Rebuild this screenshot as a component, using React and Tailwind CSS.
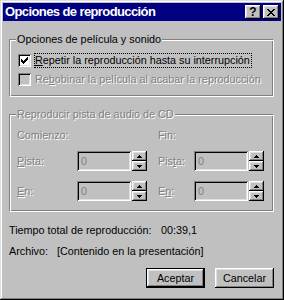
import React from 'react';
import clsx from 'clsx';

// classic 3D borders
const RAISED = 'shadow-[inset_-1px_-1px_0_#000,inset_1px_1px_0_#fff,inset_-2px_-2px_0_#808080,inset_2px_2px_0_#dfdfdf]';
const SUNKEN = 'shadow-[inset_1px_1px_0_#808080,inset_-1px_-1px_0_#fff,inset_2px_2px_0_#000,inset_-2px_-2px_0_#dfdfdf]';
const WINDOW = 'shadow-[inset_-1px_-1px_0_#000,inset_1px_1px_0_#dfdfdf,inset_-2px_-2px_0_#808080,inset_2px_2px_0_#fff]';
const ETCHED = 'border border-t-[#808080] border-l-[#808080] border-r-white border-b-white shadow-[inset_1px_1px_0_#fff,inset_-1px_-1px_0_#808080]';
const DIS = 'text-[#808080] [text-shadow:1px_1px_0_#fff]';

function Pixels({ w, h, runs, color = '#000' }) {
  return (
    <svg width={w} height={h} viewBox={`0 0 ${w} ${h}`} shapeRendering="crispEdges" className="block">
      {runs.map(([x, y, len], i) => (
        <rect key={i} x={x} y={y} width={len} height="1" fill={color} />
      ))}
    </svg>
  );
}

const CHECK = [[6, 0, 1], [5, 1, 2], [0, 2, 1], [4, 2, 3], [0, 3, 2], [3, 3, 3], [0, 4, 5], [1, 5, 3], [2, 6, 1]];
const CLOSE = [[0, 0, 2], [6, 0, 2], [1, 1, 2], [5, 1, 2], [2, 2, 4], [3, 3, 2], [2, 4, 4], [1, 5, 2], [5, 5, 2], [0, 6, 2], [6, 6, 2]];
const UP = [[2, 0, 1], [1, 1, 3], [0, 2, 5]];
const DOWN = [[0, 0, 5], [1, 1, 3], [2, 2, 1]];

function TitleButton({ children }) {
  return (
    <div className={clsx('w-[16px] h-[14px] bg-[#c0c0c0] flex items-center justify-center', RAISED)}>
      {children}
    </div>
  );
}

function CheckBox({ checked, disabled }) {
  return (
    <span className={clsx('w-[13px] h-[13px] shrink-0 flex items-center justify-center', SUNKEN, disabled ? 'bg-[#c0c0c0]' : 'bg-white')}>
      {checked && <Pixels w={7} h={7} runs={CHECK} />}
    </span>
  );
}

function NumBox() {
  return (
    <div className={clsx('w-[54px] h-[20px] shrink-0 bg-[#c0c0c0] pl-[4px] flex items-center text-[#808080]', SUNKEN)}>
      0
    </div>
  );
}

function Spinner() {
  return (
    <div className="w-[15px] h-[20px] shrink-0 ml-[1px] flex flex-col">
      <div className={clsx('h-[10px] bg-[#c0c0c0] flex items-center justify-center', RAISED)}>
        <Pixels w={5} h={3} runs={UP} />
      </div>
      <div className={clsx('h-[10px] bg-[#c0c0c0] flex items-center justify-center', RAISED)}>
        <Pixels w={5} h={3} runs={DOWN} />
      </div>
    </div>
  );
}

function Button({ children, isDefault }) {
  return (
    <div className={clsx('w-[59px] h-[20px] bg-[#c0c0c0] flex items-center justify-center', RAISED, isDefault && 'border border-black')}>
      {children}
    </div>
  );
}

export default function App() {
  return (
    <div className={clsx("w-[284px] h-[300px] bg-[#c0c0c0] p-[3px] flex flex-col font-['Liberation_Sans',Arial,sans-serif] text-[10.8px] leading-[13px] text-black", WINDOW)}>
      {/* Title bar */}
      <div className="h-[18px] shrink-0 bg-[#000080] flex items-center pl-[2px] pr-[2px]">
        <span className="text-white font-bold text-[13px] leading-[18px] tracking-[-0.6px]">Opciones de reproducción</span>
        <div className="ml-auto flex gap-[2px]">
          <TitleButton>
            <span className="font-bold text-[12px] leading-none">?</span>
          </TitleButton>
          <TitleButton>
            <Pixels w={8} h={7} runs={CLOSE} />
          </TitleButton>
        </div>
      </div>

      <div className="flex-1 flex flex-col pl-[6px] pr-[7px]">
        {/* Movie and sound options */}
        <div className={clsx('mt-[18px] pl-[8px] pb-[8px]', ETCHED)}>
          <div className="-mt-[7px] -ml-[2px] w-fit px-[1px] bg-[#c0c0c0]">Opciones de película y sonido</div>
          <div className="mt-[6px] flex flex-col gap-[2px]">
            <div className="h-[17px] flex items-center">
              <CheckBox checked />
              <span className="ml-[3px] h-[15px] pr-[1px] flex items-center border border-dotted border-black">
                <span className="underline">R</span>epetir la reproducción hasta su interrupción
              </span>
            </div>
            <div className="h-[17px] flex items-center">
              <CheckBox disabled />
              <span className={clsx('ml-[4px]', DIS)}>
                Re<span className="underline">b</span>obinar la película al acabar la reproducción
              </span>
            </div>
          </div>
        </div>

        {/* CD audio track */}
        <div className={clsx('mt-[17px] pl-[7px] pb-[10px]', ETCHED)}>
          <div className={clsx('-mt-[7px] -ml-[1px] w-fit px-[1px] bg-[#c0c0c0]', DIS)}>Reproducir pista de audio de CD</div>
          <div className="mt-[8px] flex h-[13px]">
            <span className={clsx('w-[141px]', DIS)}>Comienzo:</span>
            <span className={DIS}>Fin:</span>
          </div>
          <div className="mt-[9px] flex flex-col gap-[10px]">
            <div className="flex items-center">
              <span className={clsx('w-[60px]', DIS)}><span className="underline">P</span>ista:</span>
              <NumBox />
              <Spinner />
              <span className={clsx('ml-[11px] w-[36px]', DIS)}>Pis<span className="underline">t</span>a:</span>
              <NumBox />
              <Spinner />
            </div>
            <div className="flex items-center">
              <span className={clsx('w-[60px]', DIS)}><span className="underline">E</span>n:</span>
              <NumBox />
              <Spinner />
              <span className={clsx('ml-[11px] w-[36px]', DIS)}>E<span className="underline">n</span>:</span>
              <NumBox />
              <Spinner />
            </div>
          </div>
        </div>

        <div className="mt-[12px] flex h-[13px]">
          <span className="w-[152px]">Tiempo total de reproducción:</span>
          <span>00:39,1</span>
        </div>
        <div className="mt-[8px] flex h-[13px]">
          <span className="w-[48px]">Archivo:</span>
          <span>[Contenido en la presentación]</span>
        </div>

        <div className="mt-[10px] flex justify-end gap-[10px]">
          <Button isDefault>Aceptar</Button>
          <Button>Cancelar</Button>
        </div>
      </div>
    </div>
  );
}
